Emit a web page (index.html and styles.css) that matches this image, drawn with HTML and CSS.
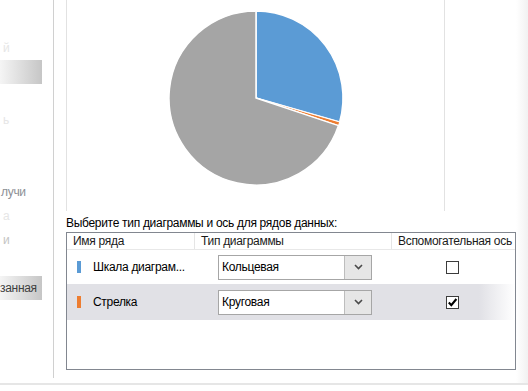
FILE: index.html
```html
<!DOCTYPE html>
<html lang="ru">
<head>
<meta charset="utf-8">
<title>Тип диаграммы</title>
<link rel="stylesheet" href="styles.css">
</head>
<body>
<div class="frame">
  <aside class="nav">
    <div class="nav-item faint">й</div>
    <div class="nav-item sel"></div>
    <div class="nav-item"></div>
    <div class="nav-item faint">ь</div>
    <div class="nav-item"></div>
    <div class="nav-item"></div>
    <div class="nav-item mid">лучи</div>
    <div class="nav-item faint">а</div>
    <div class="nav-item light">и</div>
    <div class="nav-item"></div>
    <div class="nav-item sel dark">занная</div>
  </aside>
  <main class="content">
    <div class="preview">
      <svg class="pie" width="180" height="180" viewBox="0 0 180 180">
        <path d="M90,90 L90,3 A87,87 0 0,1 173.63,113.98 Z" fill="#5b9bd5" stroke="#fff" stroke-width="1.5" stroke-linejoin="round"/>
        <path d="M90,90 L173.63,113.98 A87,87 0 0,1 172.5,117.6 Z" fill="#ed7d31" stroke="#fff" stroke-width="1" stroke-linejoin="round"/>
        <path d="M90,90 L172.5,117.6 A87,87 0 1,1 90,3 Z" fill="#a5a5a5" stroke="#fff" stroke-width="1.5" stroke-linejoin="round"/>
      </svg>
    </div>
    <div class="caption">Выберите тип диаграммы и ось для рядов данных:</div>
    <div class="table">
      <div class="thead">
        <div class="th">Имя ряда</div>
        <div class="th sep">Тип диаграммы</div>
        <div class="th sep">Вспомогательная ось</div>
      </div>
      <div class="row first">
        <div class="name"><span class="marker blue"></span>Шкала диаграм...</div>
        <div class="type">
          <div class="select"><span class="value">Кольцевая</span><span class="btn"><svg width="9" height="6" viewBox="0 0 9 6"><polyline points="1,1 4.5,4.5 8,1" fill="none" stroke="#4a4a4a" stroke-width="1.6"/></svg></span></div>
        </div>
        <div class="axis"><span class="check"></span></div>
      </div>
      <div class="row second">
        <div class="name"><span class="marker orange"></span>Стрелка</div>
        <div class="type">
          <div class="select"><span class="value">Круговая</span><span class="btn"><svg width="9" height="6" viewBox="0 0 9 6"><polyline points="1,1 4.5,4.5 8,1" fill="none" stroke="#4a4a4a" stroke-width="1.6"/></svg></span></div>
        </div>
        <div class="axis"><span class="check"><svg width="11" height="11" viewBox="0 0 11 11"><path d="M1.8,5.6 L4.3,8.2 L9.4,2" fill="none" stroke="#000" stroke-width="2.1"/></svg></span></div>
      </div>
    </div>
  </main>
  <div class="edge"></div>
</div>
<div class="bottom-line"></div>
</body>
</html>
```
FILE: styles.css
```css
* { box-sizing: border-box; }
html, body { margin: 0; padding: 0; }
body {
  width: 528px;
  height: 391px;
  overflow: hidden;
  background: #fff;
  font-family: "Segoe UI", "Liberation Sans", Arial, sans-serif;
  font-size: 12px;
  letter-spacing: -0.3px;
  color: #000;
}
.frame {
  display: flex;
  height: 383px;
}
.nav {
  width: 54px;
  flex: none;
  align-self: flex-start;
  height: 378px;
  border-right: 1px solid #d0d0d0;
  padding-top: 36px;
}
.nav-item {
  height: 24px;
  display: flex;
  align-items: center;
  padding-left: 1px;
  white-space: nowrap;
  overflow: hidden;
  color: #e6e6e6;
}
.nav-item.mid { color: #8c8f95; }
.nav-item.light { color: #c4c4c4; padding-left: 3px; }
.nav-item.faint { padding-left: 3px; }
.nav-item.sel {
  width: 42px;
  background: linear-gradient(to right, #f5f5f5, #c6c6c6);
}
.nav-item.dark { color: #404040; padding-left: 0; }
.content {
  flex: 1;
  padding-left: 12px;
  display: flex;
  flex-direction: column;
}
.preview {
  width: 379px;
  height: 211px;
  border-left: 1px solid #e2e2e2;
  border-right: 1px solid #e2e2e2;
  display: flex;
  justify-content: center;
  padding-top: 8px;
}
.pie { display: block; }
.caption {
  margin-top: 4px;
  height: 17px;
  line-height: 17px;
  white-space: nowrap;
}
.table {
  width: 450px;
  height: 138px;
  border: 1px solid #828790;
  overflow: hidden;
}
.thead, .row {
  display: grid;
  grid-template-columns: 127px 197px 1fr;
}
.thead {
  height: 17px;
  border-bottom: 1px solid #e8e8e8;
}
.th {
  line-height: 16px;
  padding-left: 6px;
  white-space: nowrap;
  overflow: hidden;
  color: #1a1a1a;
}
.th.sep { border-left: 1px solid #e5e5e5; }
.row { align-items: center; }
.row.first { height: 34px; }
.row.second {
  height: 36px;
  background: linear-gradient(to right, #e1e1e6 92%, #ffffff);
}
.name {
  display: flex;
  align-items: center;
  padding-left: 10px;
  white-space: nowrap;
}
.marker {
  width: 4px;
  height: 12px;
  margin-right: 12px;
}
.marker.blue { background: #5b9bd5; }
.marker.orange { background: #ed7d31; }
.type { padding-left: 24px; }
.select {
  width: 154px;
  height: 25px;
  border: 1px solid #a6a6a6;
  background: #fff;
  display: flex;
}
.value {
  flex: 1;
  padding-left: 3px;
  line-height: 23px;
}
.btn {
  width: 27px;
  border-left: 1px solid #bdbdbd;
  background: #e6e6e6;
  display: flex;
  align-items: center;
  justify-content: center;
}
.btn svg { display: block; }
.axis {
  display: flex;
  justify-content: center;
  padding-right: 2px;
}
.check {
  width: 13px;
  height: 13px;
  border: 1px solid #3c3c3c;
  background: #fff;
  display: flex;
  align-items: center;
  justify-content: center;
}
.check svg { display: block; }
.edge {
  width: 12px;
  flex: none;
  background: linear-gradient(to right, #ffffff, #f1f1f1);
}
.bottom-line {
  height: 2px;
  background: #e6e6e6;
}
```
